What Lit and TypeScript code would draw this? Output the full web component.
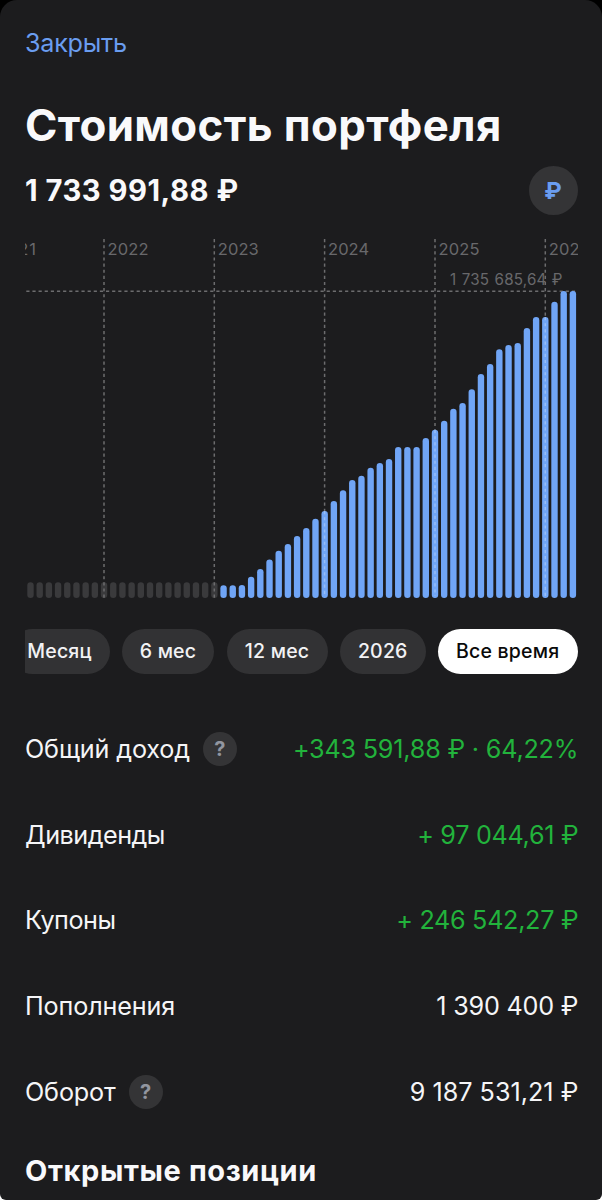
import { LitElement, html, svg, css } from "lit";
import { customElement, property } from "lit/decorators.js";

const YEARS = [
  { x: 79, label: "2022" },
  { x: 189.3, label: "2023" },
  { x: 299.6, label: "2024" },
  { x: 410, label: "2025" },
  { x: 520.3, label: "2026" },
];

const EMPTY_MONTHS = 21;
const HEIGHTS = [
  12.7, 12.7, 13, 21.3, 29, 38.5, 47.3, 54, 62, 70, 79.3, 87, 97, 107.7, 118,
  122.3, 130.3, 135, 139, 151, 151, 151, 160, 168.3, 177.3, 189.3, 195, 208.7,
  224, 234, 248.7, 253, 255, 270, 281, 281, 296.3, 307, 307,
];

@customElement("portfolio-chart")
class PortfolioChart extends LitElement {
  static styles = css`
    :host { display: block; height: 360px; flex: none; }
    svg { display: block; width: 553px; height: 360px; overflow: hidden; }
    .empty { fill: #3a3a3c; }
    .bar { fill: #70a5f6; }
    .grid { stroke: #6c6c6e; stroke-width: 1.5; stroke-dasharray: 3.2 2.93; fill: none; }
    .over { stroke: #ffffff; stroke-opacity: 0.28; stroke-width: 1.5; stroke-dasharray: 3.2 2.93; }
    text { font-family: Inter, sans-serif; fill: #68686b; }
    .year { font-size: 16.5px; }
    .max { font-size: 15.2px; word-spacing: 1px; }
  `;

  private bar(i: number, h: number, cls: string) {
    return svg`<rect class=${cls} x=${5.5 + i * 9.193 - 3.2} y=${360 - h} width="6.4" height=${h} rx="3.2"></rect>`;
  }

  render() {
    return html`<svg viewBox="0 0 553 360">
      ${Array.from({ length: EMPTY_MONTHS }, (_, i) => this.bar(i, 15.8, "empty"))}
      ${YEARS.map((y) => svg`<line class="grid" x1=${y.x} x2=${y.x} y1="1" y2="360"></line>`)}
      <line class="grid" x1="1.3" x2="552" y1="53.3" y2="53.3"></line>
      ${HEIGHTS.map((h, i) => this.bar(i + EMPTY_MONTHS, h, "bar"))}
      ${YEARS.slice(2).map(
        (y, i) => svg`<line class="over" x1=${y.x} x2=${y.x} y1=${[273, 192, 79][i]} y2="358"></line>`,
      )}
      <text class="year" x="-29" y="17" textLength="40">2021</text>
      ${YEARS.map((y) => svg`<text class="year" x=${y.x + 3.5} y="17" textLength="41">${y.label}</text>`)}
      <text class="max" x="425" y="46.8" textLength="112.5">1 735 685,64 ₽</text>
    </svg>`;
  }
}

@customElement("summary-row")
class SummaryRow extends LitElement {
  @property() label = "";
  @property() value = "";
  @property({ type: Boolean }) help = false;
  @property({ type: Boolean }) gain = false;

  static styles = css`
    :host { display: flex; flex: none; align-items: center; height: 85.8px; justify-content: space-between; }
    .left { display: flex; align-items: center; gap: 13px; }
    .label { font-size: 25.2px; letter-spacing: -0.15px; color: #f5f5f7; }
    .value { font-size: 25.2px; letter-spacing: -0.2px; margin-right: -0.8px; color: #f5f5f7; white-space: pre; }
    :host([tight]) .label { letter-spacing: -0.5px; }
    :host([tight]) .value { letter-spacing: -0.3px; }
    :host([loose]) .value { letter-spacing: 0; }
    .value.gain { color: #22b33c; }
    .help {
      width: 34px; height: 34px; border-radius: 50%; background: #343436; color: #9296a0;
      display: flex; align-items: center; justify-content: center; font-size: 20px; font-weight: 700;
    }
  `;

  render() {
    return html`
      <div class="left">
        <span class="label">${this.label}</span>
        ${this.help ? html`<span class="help">?</span>` : null}
      </div>
      <span class="value ${this.gain ? "gain" : ""}">${this.value}</span>
    `;
  }
}

@customElement("app-root")
class AppRoot extends LitElement {
  static styles = css`
    :host { display: block; height: 1200px; background: linear-gradient(#000 50%, #fff 50%); font-family: Inter, sans-serif; }
    .sheet {
      box-sizing: border-box; width: 602px; height: 1200px; padding: 0 24.5px 0 25px; overflow: hidden;
      background: #1c1c1e; border-radius: 17px 17px 6px 6px; color: #f9f9fb; display: flex; flex-direction: column;
    }
    .close { flex: none; height: 86px; display: flex; align-items: center; font-size: 25.2px; letter-spacing: -0.25px; color: #6a9df0; }
    .title { flex: none; margin: 0; height: 78px; display: flex; align-items: center; font-size: 43.8px; letter-spacing: 0.38px; font-weight: 700; white-space: nowrap; }
    .total { flex: none; height: 52px; display: flex; align-items: center; justify-content: space-between; margin-bottom: 22px; }
    .amount { font-size: 29.2px; letter-spacing: 0.5px; font-weight: 650; white-space: pre; }
    .currency {
      width: 49px; height: 49px; border-radius: 50%; background: #343436; color: #6a9df0;
      display: flex; align-items: center; justify-content: center; font-size: 23.5px; font-weight: 650;
    }
    .periods { display: flex; justify-content: flex-end; gap: 12.5px; height: 45.5px; margin: 30.5px 0 32px; overflow: hidden; flex: none; }
    .pill {
      box-sizing: border-box; flex: none; border-radius: 23px; background: #323234; color: #f2f2f4;
      display: flex; align-items: center; justify-content: center; font-size: 19.5px; font-weight: 550; letter-spacing: 0.2px;
    }
    .month { width: 100px; }
    .half { width: 92px; }
    .year { width: 101px; }
    .current { width: 85.5px; }
    .all { width: 139.5px; background: #fff; color: #0a0a0a; }
    .section { flex: none; margin: 0; font-size: 29px; letter-spacing: 0.6px; font-weight: 700; height: 72px; display: flex; align-items: center; }
  `;

  render() {
    return html`<div class="sheet">
      <div class="close">Закрыть</div>
      <h1 class="title">Стоимость портфеля</h1>
      <div class="total">
        <span class="amount">1 733 991,88 ₽</span>
        <span class="currency">₽</span>
      </div>
      <portfolio-chart></portfolio-chart>
      <div class="periods">
        <span class="pill month">Месяц</span>
        <span class="pill half">6 мес</span>
        <span class="pill year">12 мес</span>
        <span class="pill current">2026</span>
        <span class="pill all">Все время</span>
      </div>
      <summary-row label="Общий доход" value="+343 591,88 ₽ · 64,22%" help gain></summary-row>
      <summary-row label="Дивиденды" value="+ 97 044,61 ₽" gain tight></summary-row>
      <summary-row label="Купоны" value="+ 246 542,27 ₽" gain tight></summary-row>
      <summary-row label="Пополнения" value="1 390 400 ₽"></summary-row>
      <summary-row label="Оборот" value="9 187 531,21 ₽" help loose></summary-row>
      <h2 class="section">Открытые позиции</h2>
    </div>`;
  }
}
